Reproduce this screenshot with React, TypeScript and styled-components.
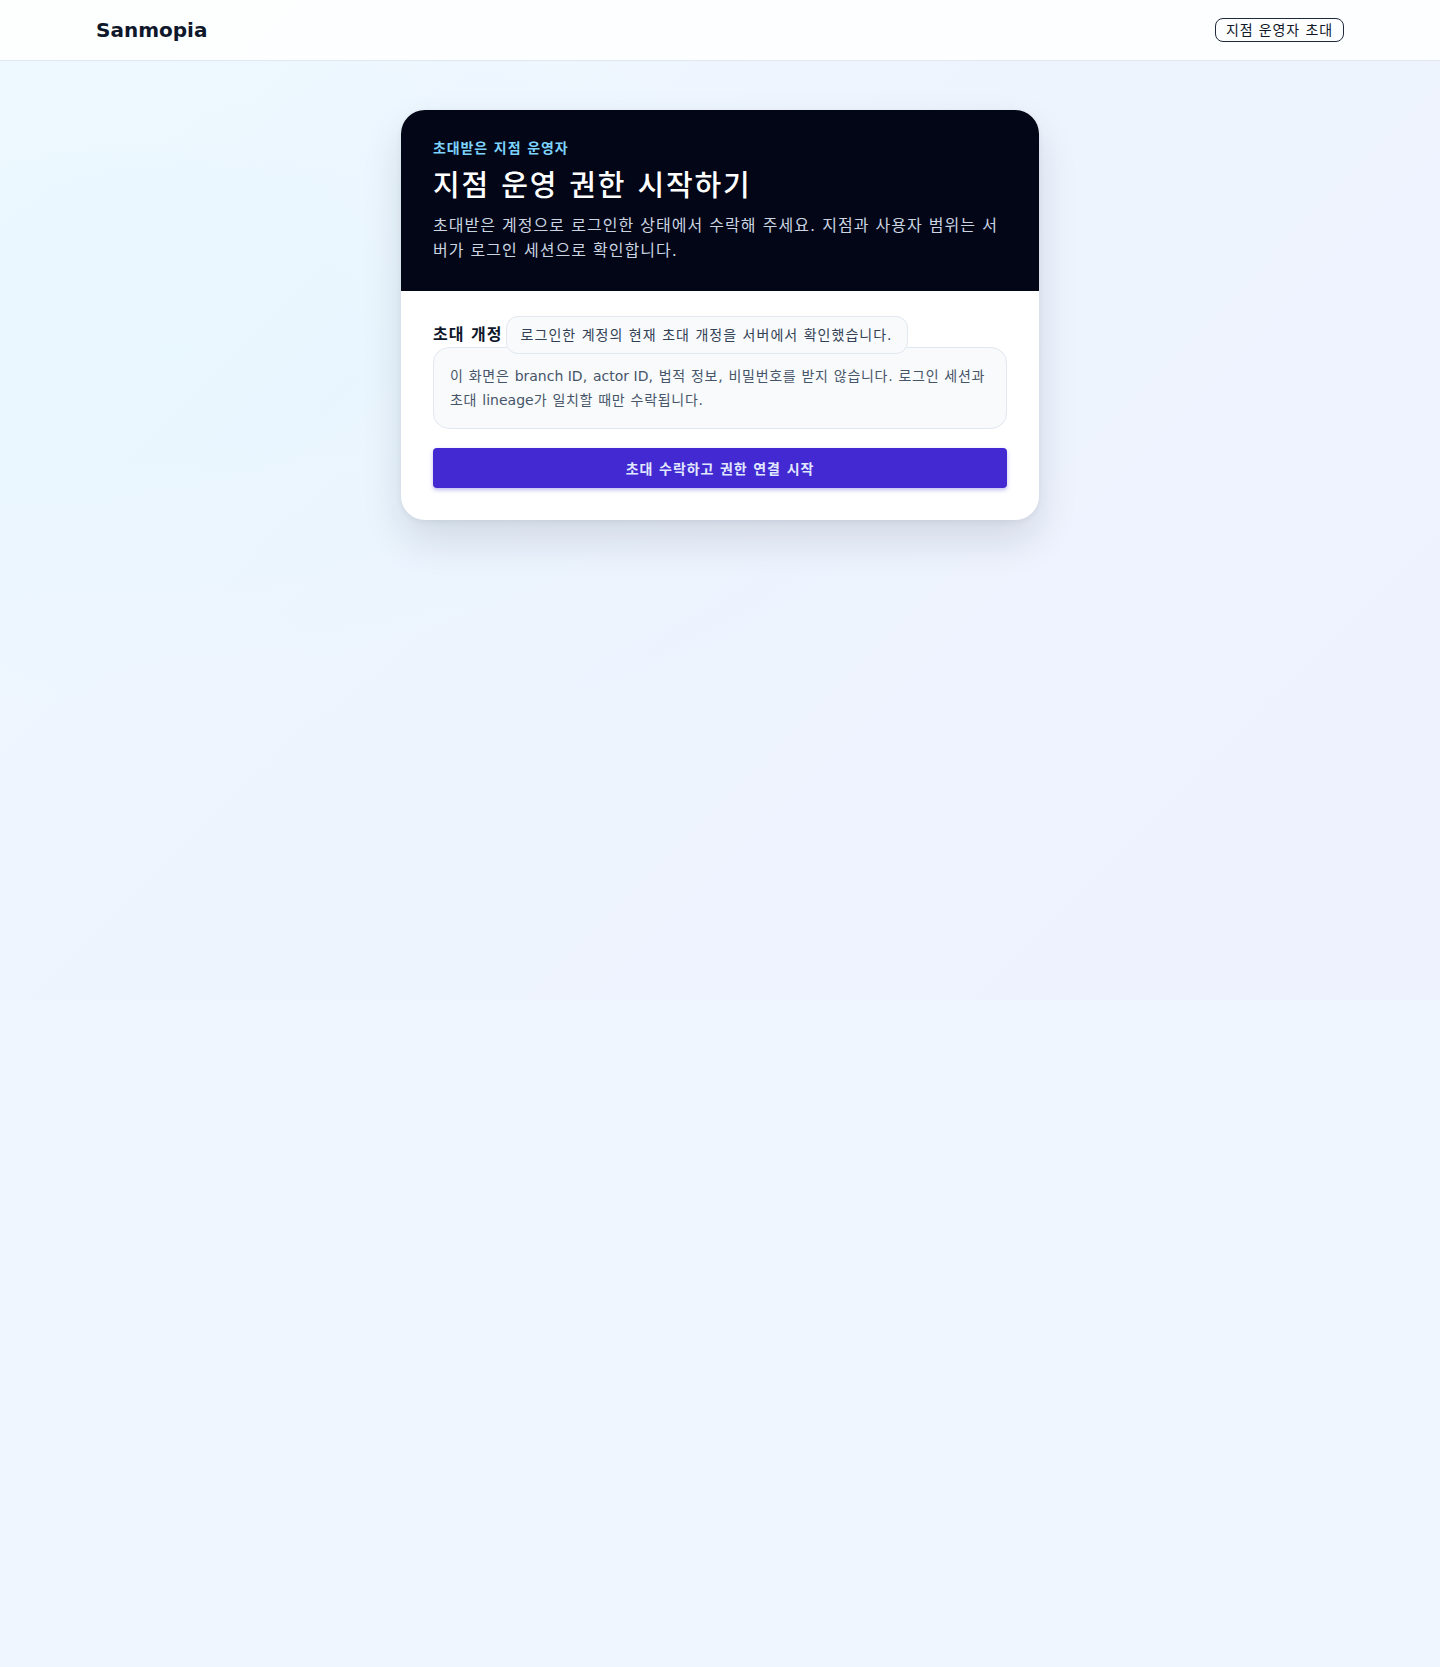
import styled, { createGlobalStyle } from "styled-components";

const GlobalStyle = createGlobalStyle`
  * { box-sizing: border-box; }
  html, body {
    margin: 0;
    padding: 0;
    background: #eff6ff;
    font-family: "DejaVu Sans", "Noto Sans CJK KR", sans-serif;
    color: #0f172a;
  }
`;

const Page = styled.div`
  min-height: 1000px;
  background:
    radial-gradient(ellipse at 12% 35%, rgba(226, 246, 254, 0.5), transparent 45%),
    linear-gradient(135deg, #f0f9ff 0%, #eef4fe 45%, #eef2ff 100%);
`;

const Header = styled.header`
  height: 61px;
  background: rgba(255, 255, 255, 0.88);
  border-bottom: 1px solid #e2e8f0;
`;

const HeaderInner = styled.div`
  max-width: 1248px;
  height: 100%;
  margin: 0 auto;
  display: flex;
  align-items: center;
  justify-content: space-between;
`;

const Logo = styled.div`
  font-size: 20px;
  font-weight: 700;
  color: #0f172a;
`;

// hangul in the source renders wider than the installed CJK face, so
// korean copy gets a little tracking to keep the same line breaks
const Hangul = `letter-spacing: 0.064em;`;

const InviteButton = styled.button`
  font-family: inherit;
  font-size: 14px;
  line-height: 20px;
  ${Hangul}
  padding: 1px 10px;
  color: #111827;
  background: transparent;
  border: 1px solid #1e293b;
  border-radius: 8px;
  cursor: pointer;
`;

const Main = styled.main`
  display: flex;
  justify-content: center;
  padding: 49px 24px 0;
`;

const Card = styled.section`
  width: 638px;
  background: #ffffff;
  border-radius: 24px;
  overflow: hidden;
  box-shadow: 0 20px 40px rgba(15, 23, 42, 0.12), 0 2px 6px rgba(15, 23, 42, 0.06);
`;

const Hero = styled.div`
  background: #020617;
  padding: 28px 32px;
`;

const Eyebrow = styled.p`
  margin: 0;
  font-size: 14px;
  line-height: 20px;
  font-weight: 700;
  ${Hangul}
  color: #7dd3fc;
`;

const Title = styled.h1`
  margin: 8px 0 0;
  font-size: 29px;
  line-height: 40px;
  font-weight: 500;
  ${Hangul}
  color: #ffffff;
`;

const Lead = styled.p`
  margin: 7px 0 0;
  font-size: 16px;
  line-height: 25px;
  ${Hangul}
  color: #cbd5e1;
`;

const Body = styled.div`
  padding: 32px;
`;

const Row = styled.p`
  margin: 0;
  font-size: 16px;
  line-height: 24px;
  ${Hangul}
`;

const Label = styled.strong`
  margin-right: 3px;
  font-weight: 700;
  color: #0f172a;
`;

const Pill = styled.span`
  padding: 10px 14px;
  font-size: 14px;
  color: #334155;
  background: #f8fafc;
  border: 1px solid #e2e8f0;
  border-radius: 12px;
`;

const Note = styled.div`
  padding: 16px;
  font-size: 14px;
  line-height: 24px;
  letter-spacing: 0.05em;
  color: #475569;
  background: #f8fafc;
  border: 1px solid #e2e8f0;
  border-radius: 16px;
`;

const Latin = styled.span`
  letter-spacing: 0;
`;

const Primary = styled.button`
  display: block;
  width: 100%;
  height: 40px;
  margin-top: 19px;
  font-family: inherit;
  font-size: 14px;
  font-weight: 700;
  ${Hangul}
  color: #e0e7ff;
  background: #4229d2;
  border: none;
  border-radius: 4px;
  box-shadow: 0 2px 4px rgba(67, 56, 202, 0.35);
  cursor: pointer;
`;

export default function App() {
  return (
    <>
      <GlobalStyle />
      <Page>
        <Header>
          <HeaderInner>
            <Logo>Sanmopia</Logo>
            <InviteButton>지점 운영자 초대</InviteButton>
          </HeaderInner>
        </Header>
        <Main>
          <Card>
            <Hero>
              <Eyebrow>초대받은 지점 운영자</Eyebrow>
              <Title>지점 운영 권한 시작하기</Title>
              <Lead>
                초대받은 계정으로 로그인한 상태에서 수락해 주세요. 지점과 사용자 범위는 서버가 로그인 세션으로
                확인합니다.
              </Lead>
            </Hero>
            <Body>
              <Row>
                <Label>초대 개정</Label>
                <Pill>로그인한 계정의 현재 초대 개정을 서버에서 확인했습니다.</Pill>
              </Row>
              <Note>
                이 화면은 <Latin>branch ID</Latin>, <Latin>actor ID</Latin>, 법적 정보, 비밀번호를 받지 않습니다.
                로그인 세션과 초대 <Latin>lineage</Latin>가 일치할 때만 수락됩니다.
              </Note>
              <Primary>초대 수락하고 권한 연결 시작</Primary>
            </Body>
          </Card>
        </Main>
      </Page>
    </>
  );
}
